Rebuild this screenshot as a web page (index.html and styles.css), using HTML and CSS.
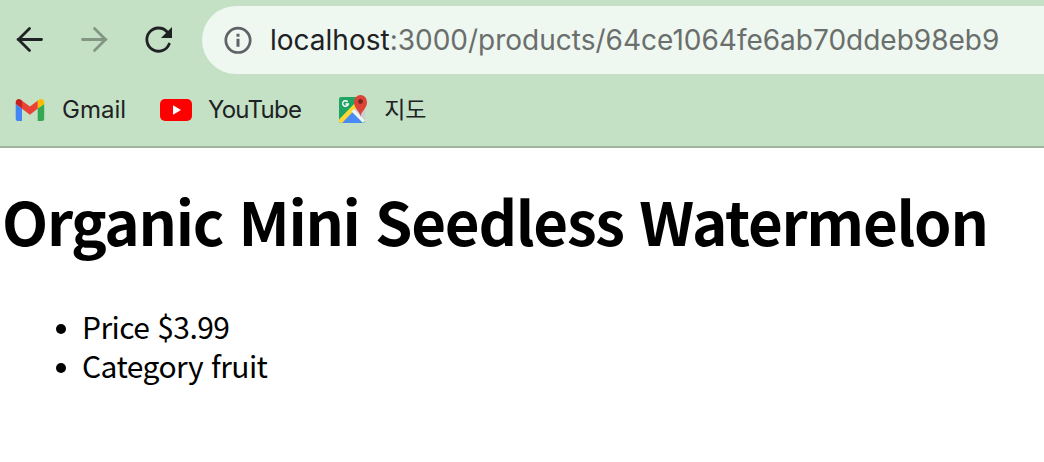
FILE: index.html
```html
<!DOCTYPE html>
<html lang="ko">
  <head>
    <meta charset="UTF-8" />
    <meta name="viewport" content="width=device-width, initial-scale=1.0" />
    <title>Organic Mini Seedless Watermelon</title>
    <link rel="stylesheet" href="styles.css">
  </head>
  <body>
    <!-- Browser -->
    <header class="browser">
      <div class="toolbar">
        <svg class="nav-icon" viewBox="0 0 28 28">
          <path d="M25.500 13.500H2M13.500 2.500L2.500 13.500l11 11" />
        </svg>
        <svg class="nav-icon disabled" viewBox="0 0 28 28">
          <path d="M2.500 13.500H26M14.500 2.500L25.500 13.500l-11 11" />
        </svg>
        <svg class="nav-icon" viewBox="0 0 28 28">
          <path d="M23.200 6A11.600 11.600 0 1 0 25.200 18" />
          <path class="solid" d="M28 1V12H17z" />
        </svg>
        <div class="address-bar">
          <svg class="info-icon" viewBox="0 0 28 28">
            <circle cx="14" cy="14.300" r="12.200" />
            <path class="info-stem" d="M14 12.800v8M14 7.800v3" />
          </svg>
          <p class="url"><span class="host">localhost</span>:3000/products/64ce1064fe6ab70ddeb98eb9</p>
        </div>
      </div>
      <nav class="bookmarks">
        <a class="gmail">
          <svg width="30" height="30" viewBox="0 0 30 30">
            <path fill="#4285f4" d="M.7 9l6.300 4.500V26H2.700a2 2 0 0 1-2-2z" />
            <path fill="#34a853" d="M22.700 13.500L29.200 9v15a2 2 0 0 1-2 2h-4.500z" />
            <path fill="#ea4335" d="M6.700 5.500l8.200 6 8-6V13.500l-8 6.300-8.200-6.300z" />
            <path fill="#c5221f" d="M.7 7.500C.7 4.500 3.700 3 6.200 5L7 5.500v8L.7 9z" />
            <path fill="#fbbc04" d="M29.200 7.500c0-3-3-4.500-5.700-2.500l-.8.500v8L29.200 9z" />
          </svg>
          <span>Gmail</span>
        </a>
        <a class="youtube">
          <svg width="32" height="30" viewBox="0 0 32 30">
            <rect y="4" width="32" height="22" rx="5" fill="#f00" />
            <path fill="#fff" d="M13 10.300v9.400l8-4.700z" />
          </svg>
          <span>YouTube</span>
        </a>
        <a class="maps">
          <svg width="30" height="30" viewBox="0 0 30 30">
            <rect x="1" y="2" width="26" height="26" rx="2" fill="#1fa463" />
            <path fill="#c9cdd1" d="M14 15l8-8 5 5v14l-1.500 1z" />
            <path fill="#4a8af4" d="M3 28l11-13 11 13z" />
            <path fill="#fdd835" d="M1 24.500L19 6l1.500 5L4 28H2.500L1 26.500z" />
            <path fill="#f1f3f4" d="M13.500 16.500l2.500-2.500 11 11.500-2 2.500z" />
            <path fill="#db4437" d="M22.500 22c-.3-6-6.500-8-6.500-15a6.500 7 0 0 1 13 0c0 7-6.200 9-6.500 15z" />
            <circle cx="22.500" cy="6.500" r="2.400" fill="#7b231c" />
            <path class="maps-g" d="M9.600 6.700A2.800 2.800 0 1 0 10.200 9H7.500" />
          </svg>
          <span>지도</span>
        </a>
      </nav>
    </header>
    <!-- Product -->
    <main>
      <h1>Organic Mini Seedless Watermelon</h1>
      <ul>
        <li>Price $3.99</li>
        <li>Category fruit</li>
      </ul>
    </main>
  </body>
</html>
```
FILE: styles.css
```css
* {
  margin: 0;
  padding: 0;
  box-sizing: border-box;
}
body {
  background: #ffffff;
  color: #000000;
  font-family: "Noto Sans CJK KR", sans-serif;
  overflow: hidden;
}
/* ================= BROWSER ================= */
.browser {
  height: 148px;
  padding-top: 6px;
  background: #c5e1c5;
  border-bottom: 2px solid #9fb5a0;
  font-family: Inter, "Noto Sans CJK KR", sans-serif;
}
.toolbar {
  display: flex;
  align-items: center;
  gap: 36px;
  height: 68px;
  padding-left: 16px;
}
.nav-icon {
  flex: none;
  width: 28px;
  height: 28px;
  fill: none;
  stroke: #202124;
  stroke-width: 2.8;
  stroke-linecap: round;
}
.nav-icon .solid {
  fill: #202124;
  stroke: none;
}
.disabled {
  stroke: #839683;
}
.address-bar {
  display: flex;
  align-items: center;
  flex: 1;
  gap: 18px;
  height: 68px;
  margin-left: -6px;
  padding-left: 22px;
  background: #eef7f0;
  border-radius: 34px 0 0 34px;
}
.info-icon {
  flex: none;
  width: 28px;
  height: 28px;
  fill: none;
  stroke: #5f6368;
  stroke-width: 2.7;
}
.info-stem {
  stroke-width: 3;
}
.url {
  color: #6a6e6c;
  font-size: 28px;
  line-height: 68px;
  white-space: nowrap;
}
.host {
  color: #202124;
}
/* ================= BOOKMARKS ================= */
.bookmarks {
  display: flex;
  align-items: center;
  gap: 34px;
  height: 72px;
  padding-left: 15px;
}
.bookmarks a {
  display: flex;
  align-items: center;
  gap: 17px;
  color: #202124;
  font-size: 24px;
  line-height: 30px;
}
.bookmarks .youtube {
  gap: 16px;
  margin-right: 3px;
  letter-spacing: -0.75px;
}
.bookmarks .maps {
  gap: 16px;
  font-size: 23px;
}
.maps-g {
  fill: none;
  stroke: #ffffff;
  stroke-width: 1.4;
}
/* ================= PRODUCT ================= */
main {
  padding: 36px 2px 0;
}
h1 {
  font-size: 60px;
  font-weight: 700;
  letter-spacing: -1.28px;
  line-height: 72px;
  white-space: nowrap;
}
ul {
  margin-top: 51px;
  padding-left: 54px;
  list-style: none;
}
li {
  display: flex;
  align-items: center;
  gap: 16px;
  font-size: 30px;
  letter-spacing: -0.55px;
  line-height: 39px;
}
li::before {
  content: "";
  width: 10px;
  height: 10px;
  margin-top: 4px;
  border-radius: 50%;
  background: #000000;
}
```
